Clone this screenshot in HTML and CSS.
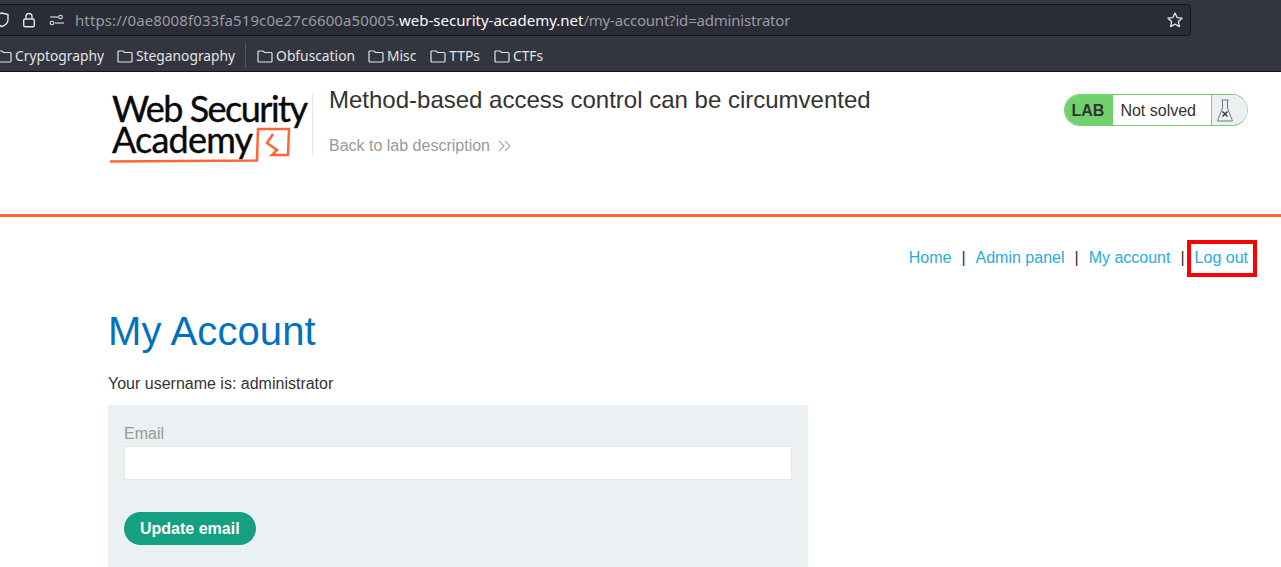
FILE: index.html
```html
<!DOCTYPE html>
<html>
<head>
    <title>My Account</title>
    <link rel="stylesheet" href="styles.css">
</head>
<body>
<div class="browser-bar">
    <div class="url-row">
        <div class="url-box">
            <svg class="icon-shield" width="14" height="16" viewBox="0 0 14 16"><path d="M1 2.500 7 1l6 1.500v5c0 3.500-2.500 5.800-6 7-3.500-1.200-6-3.500-6-7z" fill="none" stroke="#e4e4e8" stroke-width="1.400"/></svg>
            <svg class="icon-lock" width="14" height="16" viewBox="0 0 14 16"><path d="M4 7V4.500a3 3 0 0 1 6 0V7" fill="none" stroke="#e4e4e8" stroke-width="1.400"/><rect x="1.700" y="7" width="10.600" height="7.800" rx="1.500" fill="none" stroke="#e4e4e8" stroke-width="1.400"/></svg>
            <svg class="icon-perm" width="16" height="12" viewBox="0 0 16 12"><circle cx="11.500" cy="3" r="1.800" fill="none" stroke="#e4e4e8" stroke-width="1.100"/><path d="M1 3h8" stroke="#e4e4e8" stroke-width="1.100" fill="none"/><circle cx="3" cy="9" r="1.800" fill="none" stroke="#e4e4e8" stroke-width="1.100"/><path d="M6 9h9" stroke="#e4e4e8" stroke-width="1.100"/></svg>
            <div class="url-text">https://0ae8008f033fa519c0e27c6600a50005.<span class="url-domain">web-security-academy.net</span><span class="url-path">/my-account?id=administrator</span></div>
            <svg class="icon-star" width="18" height="18" viewBox="0 0 18 18"><path d="M9 2l2.100 4.600 5 .6-3.700 3.400 1 5L9 13.100l-4.400 2.500 1-5L1.900 7.200l5-.6z" fill="none" stroke="#e4e4e8" stroke-width="1.300" stroke-linejoin="round"/></svg>
        </div>
    </div>
    <div class="bookmarks">
        <div class="bookmark bookmark-first"><svg class="folder" width="16" height="14" viewBox="0 0 16 14"><path d="M1 3a1 1 0 0 1 1-1h4l1.500 1.500H14a1 1 0 0 1 1 1V12a1 1 0 0 1-1 1H2a1 1 0 0 1-1-1z" fill="none" stroke="#e4e4e8" stroke-width="1.200"/></svg>Cryptography</div>
        <div class="bookmark"><svg class="folder" width="16" height="14" viewBox="0 0 16 14"><path d="M1 3a1 1 0 0 1 1-1h4l1.500 1.500H14a1 1 0 0 1 1 1V12a1 1 0 0 1-1 1H2a1 1 0 0 1-1-1z" fill="none" stroke="#e4e4e8" stroke-width="1.200"/></svg>Steganography</div>
        <div class="bookmark-sep"></div>
        <div class="bookmark"><svg class="folder" width="16" height="14" viewBox="0 0 16 14"><path d="M1 3a1 1 0 0 1 1-1h4l1.500 1.500H14a1 1 0 0 1 1 1V12a1 1 0 0 1-1 1H2a1 1 0 0 1-1-1z" fill="none" stroke="#e4e4e8" stroke-width="1.200"/></svg>Obfuscation</div>
        <div class="bookmark bookmark-wide"><svg class="folder" width="16" height="14" viewBox="0 0 16 14"><path d="M1 3a1 1 0 0 1 1-1h4l1.500 1.500H14a1 1 0 0 1 1 1V12a1 1 0 0 1-1 1H2a1 1 0 0 1-1-1z" fill="none" stroke="#e4e4e8" stroke-width="1.200"/></svg>Misc</div>
        <div class="bookmark bookmark-wide"><svg class="folder" width="16" height="14" viewBox="0 0 16 14"><path d="M1 3a1 1 0 0 1 1-1h4l1.500 1.500H14a1 1 0 0 1 1 1V12a1 1 0 0 1-1 1H2a1 1 0 0 1-1-1z" fill="none" stroke="#e4e4e8" stroke-width="1.200"/></svg>TTPs</div>
        <div class="bookmark"><svg class="folder" width="16" height="14" viewBox="0 0 16 14"><path d="M1 3a1 1 0 0 1 1-1h4l1.500 1.500H14a1 1 0 0 1 1 1V12a1 1 0 0 1-1 1H2a1 1 0 0 1-1-1z" fill="none" stroke="#e4e4e8" stroke-width="1.200"/></svg>CTFs</div>
    </div>
</div>

<div class="lab-header">
    <div class="logo">
        <div class="logo-line">Web Security</div>
        <div class="logo-line logo-line-2">Academy</div>
        <svg class="logo-mark" width="198" height="40" viewBox="0 0 198 40"><path d="M0 35.500c50 0 100-.5 147-1L148 3h31l-1 26h-16l5-5-10-7 6-9" fill="none" stroke="#ff6633" stroke-width="2.500"/></svg>
    </div>
    <div class="lab-title">
        <h2>Method-based access control can be circumvented</h2>
        <a class="back-link" href="#">Back to lab description
            <svg width="14" height="12" viewBox="0 0 14 12"><path d="M1 1l5 5-5 5M7 1l5 5-5 5" fill="none" stroke="#aaa69f" stroke-width="1.100"/></svg>
        </a>
    </div>
    <div class="lab-status">
        <div class="lab-tag">LAB</div>
        <div class="lab-state">Not solved</div>
        <div class="lab-flask">
            <svg width="18" height="26" viewBox="0 0 18 26"><path d="M5.500 3h7M6.500 3v8L1.500 24h15l-5-13V3" fill="none" stroke="#777" stroke-width="1"/><path d="M6.500 14.500l5 5M11.500 14.500l-5 5" stroke="#333" stroke-width="1.400"/></svg>
        </div>
    </div>
</div>

<div class="content">
    <div class="top-links">
        <a href="#">Home</a><span class="pipe">|</span>
        <a href="#">Admin panel</a><span class="pipe">|</span>
        <a href="#">My account</a><span class="pipe">|</span>
        <a class="marked" href="#">Log out</a>
    </div>
    <h1>My Account</h1>
    <p class="username">Your username is: administrator</p>
    <form class="email-form">
        <label>Email</label>
        <input type="email">
        <button type="button" class="btn">Update email</button>
    </form>
</div>
</body>
</html>
```

FILE: styles.css
```css
html, body {
    height: 100%;
}
body {
    margin: 0;
    font-family: "Liberation Sans", Arial, sans-serif;
    background-color: #fff;
    color: #333332;
    overflow: hidden;
}
.browser-bar {
    height: 72px;
    box-sizing: border-box;
    background-color: #33363f;
    border-bottom: 1px solid #14141a;
    color: #e4e4e8;
}
.url-row {
    height: 38px;
    padding-top: 4px;
    box-sizing: border-box;
}
.url-box {
    width: 1199px;
    height: 32px;
    margin-left: -8px;
    box-sizing: border-box;
    background-color: #2a2c37;
    border: 1px solid #14141a;
    border-radius: 4px;
    display: flex;
    align-items: center;
    padding-right: 6px;
}
.icon-shield {
    margin-left: 2px;
}
.icon-lock {
    margin-left: 13px;
}
.icon-perm {
    margin-left: 13px;
}
.url-text {
    margin-left: 10px;
    font-family: "Noto Sans", sans-serif;
    font-size: 15px;
    letter-spacing: 0.1px;
    color: #9a9ba3;
    white-space: nowrap;
    flex: 1;
}
.url-domain {
    color: #fbfbfe;
    letter-spacing: 0;
}
.url-path {
    letter-spacing: -0.2px;
}
.bookmarks {
    display: flex;
    align-items: center;
    height: 33px;
    box-sizing: border-box;
    padding-top: 2px;
    font-family: "Noto Sans", sans-serif;
    font-size: 13.800px;
}
.bookmark {
    display: flex;
    align-items: center;
    margin-right: 13px;
    white-space: nowrap;
}
.bookmark-first {
    margin-left: -4px;
}
.bookmark-wide {
    margin-right: 14px;
}
.folder {
    margin-right: 3px;
}
.bookmark-sep {
    width: 1px;
    height: 25px;
    background-color: #55575f;
    margin-right: 11px;
    margin-left: -3px;
}
.lab-header {
    height: 142px;
    border-bottom: 3px solid #ff6633;
    display: flex;
    align-items: flex-start;
    padding-left: 110px;
    padding-right: 33px;
}
.logo {
    position: relative;
    width: 202px;
    height: 63px;
    margin-top: 21px;
    border-right: 1px solid #e6e6e6;
    font-family: Lato, "Open Sans", sans-serif;
    color: #0a0a0a;
    font-size: 36px;
    line-height: 31px;
    letter-spacing: -1.500px;
    -webkit-text-stroke: 0.4px #0a0a0a;
}
.logo-line {
    white-space: nowrap;
    padding-left: 2px;
}
.logo-line-2 {
    letter-spacing: -0.800px;
}
.logo-mark {
    position: absolute;
    left: 0;
    top: 33px;
}
.lab-title {
    flex: 1;
    padding-left: 16px;
    padding-top: 13px;
}
.lab-title h2 {
    margin: 0;
    font-size: 24px;
    font-weight: 400;
    line-height: 29px;
}
.back-link {
    display: inline-flex;
    align-items: center;
    gap: 8px;
    margin-top: 23px;
    font-size: 16px;
    color: #999;
    text-decoration: none;
}
.lab-status {
    display: flex;
    align-items: stretch;
    height: 32px;
    box-sizing: border-box;
    margin-top: 22px;
    border: 1px solid #70d16d;
    border-right-color: #a5e3a3;
    border-radius: 16px;
    overflow: hidden;
    font-size: 16px;
}
.lab-tag {
    background-color: #70d16d;
    font-weight: 700;
    padding: 0 9px 0 7px;
    line-height: 32px;
}
.lab-state {
    padding: 0 15px 0 7px;
    line-height: 32px;
    border-right: 1px solid #70d16d;
}
.lab-flask {
    width: 35px;
    background-color: #ebf0f2;
    display: flex;
    align-items: center;
    padding-left: 4px;
    box-sizing: border-box;
}
.content {
    padding-left: 108px;
}
.top-links {
    display: flex;
    justify-content: flex-end;
    align-items: center;
    height: 40px;
    margin-top: 21px;
    padding-right: 28px;
    font-size: 16px;
}
.top-links a {
    color: #29abe2;
    text-decoration: none;
}
.pipe {
    margin: 0 10px;
}
.top-links .marked {
    outline: 4px solid #f00;
    padding: 5px 5px 6px 4px;
    margin-left: -4px;
    line-height: 18px;
}
h1 {
    margin: 29px 0 0;
    font-size: 40px;
    font-weight: 400;
    line-height: 48px;
    letter-spacing: 0.1px;
    color: #0071bc;
}
.username {
    margin: 19px 0 0;
    font-size: 16px;
    line-height: 20px;
}
.email-form {
    width: 700px;
    height: 162px;
    box-sizing: border-box;
    margin-top: 11px;
    padding: 19px 16px 0;
    background-color: #ebf0f2;
}
.email-form label {
    display: block;
    color: #999;
    font-size: 16px;
    line-height: 20px;
}
.email-form input {
    display: block;
    width: 100%;
    height: 34px;
    box-sizing: border-box;
    margin: 2px 0 0;
    border: 1px solid #e6e6e6;
    background-color: #fff;
}
.btn {
    display: block;
    margin-top: 32px;
    height: 33px;
    padding: 0 16px;
    border: none;
    border-radius: 17px;
    background-color: #16a082;
    color: #fff;
    font-family: "Liberation Sans", Arial, sans-serif;
    font-size: 16px;
    font-weight: 700;
}
```
